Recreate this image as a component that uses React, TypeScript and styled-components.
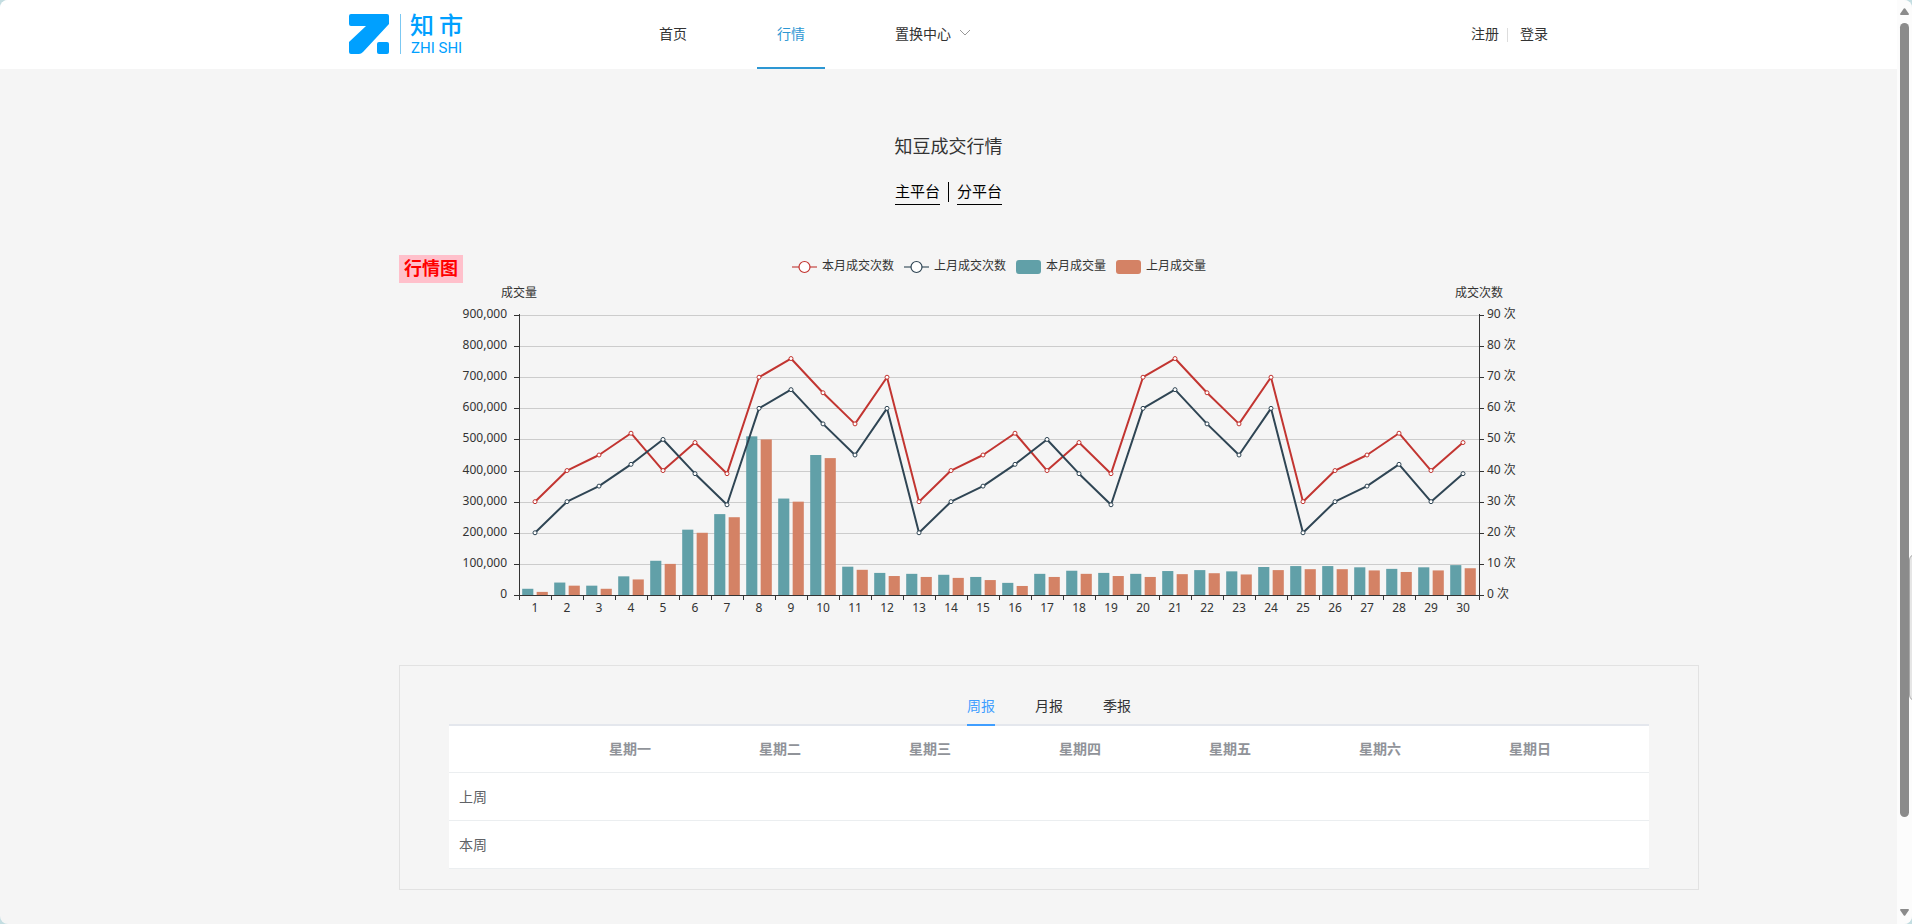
import React, { useState } from "react";
import styled, { createGlobalStyle } from "styled-components";

const GlobalStyle = createGlobalStyle`
  *, *::before, *::after { box-sizing: border-box; }
  body {
    margin: 0;
    background: #c3dde1;
    color: #333;
    font-family: "Noto Sans", "Noto Sans CJK SC", sans-serif;
    font-size: 14px;
  }
  a { color: inherit; text-decoration: none; }
  button { font: inherit; color: inherit; background: none; border: 0; padding: 0; cursor: pointer; }
`;

const Shell = styled.div`
  position: relative;
  display: flex;
  min-height: 100vh;
  border-radius: 8px;
  overflow: hidden;
  background: #f5f5f5;
`;

const Page = styled.div`
  flex: 1;
  min-width: 0;
`;

const Container = styled.div`
  max-width: 1199px;
  margin: 0 auto;
`;

const Header = styled.header`
  background: #fff;
`;

const HeaderInner = styled(Container)`
  display: flex;
  align-items: center;
  height: 69px;
`;

const Logo = styled.a`
  display: block;
  margin-right: 175px;
  svg { display: block; }
`;

const Nav = styled.nav`
  display: flex;
  gap: 50px;
  height: 100%;
`;

const NavItem = styled.a<{ $active?: boolean }>`
  display: flex;
  align-items: center;
  gap: 8px;
  height: 100%;
  padding: 0 20px 2px;
  border-bottom: 2px solid ${(p) => (p.$active ? "#2d97d3" : "transparent")};
  color: ${(p) => (p.$active ? "#2d97d3" : "#333")};
`;

const Account = styled.div`
  display: flex;
  align-items: center;
  margin-left: auto;
`;

const AccountLink = styled.a`
  padding-bottom: 4px;
`;

const AccountDivider = styled.span`
  width: 1px;
  height: 14px;
  margin: 0 12px 0 8px;
  background: #ddd;
`;

const Title = styled.h1`
  margin: 0;
  padding-top: 65px;
  font-size: 18px;
  font-weight: 400;
  line-height: 24px;
  text-align: center;
`;

const Platforms = styled.div`
  display: flex;
  justify-content: center;
  gap: 8px;
  margin: 24px 0 50px;
  color: #000;
  font-size: 15px;
`;

const PlatformLink = styled.a`
  padding-bottom: 4px;
  border-bottom: 1px solid #000;
  line-height: 18px;
`;

const PlatformDivider = styled.span`
  width: 1px;
  height: 20px;
  background: #000;
`;

const Content = styled.main`
  margin: 0 -151px 34px 50px;
  @media (max-width: 1650px) {
    margin: 0 0 34px;
  }
`;

const ChartPanel = styled.figure`
  max-width: 1200px;
  margin: 0 0 10px;
`;

const ChartHead = styled.div`
  display: grid;
  grid-template-columns: 1fr auto 1fr;
  height: 28px;
`;

const ChartTag = styled.figcaption`
  justify-self: start;
  padding: 0 5px;
  background: #ffc0cb;
  color: #f00;
  font-size: 18px;
  font-weight: 700;
  line-height: 26px;
`;

const Legend = styled.ul`
  display: flex;
  gap: 10px;
  margin: 0;
  padding: 0;
  list-style: none;
`;

const LegendItem = styled.li`
  display: flex;
  align-items: center;
  gap: 5px;
  height: 24px;
  padding-left: 0;
  font-size: 12px;
  line-height: 20px;
  svg { display: block; }
`;

const LegendText = styled.span`
  padding-bottom: 2px;
`;

const Plot = styled.svg`
  display: block;
  width: 100%;
  height: auto;
  font-size: 12px;
`;

const Report = styled.section`
  padding: 20px 49px;
  border: 1px solid #e2e2e2;
`;

const Tabs = styled.div`
  display: flex;
  justify-content: center;
  border-bottom: 2px solid #e4e7ed;
`;

const Tab = styled.button<{ $active: boolean }>`
  height: 40px;
  margin: 0 20px -2px;
  padding-top: 2px;
  border-bottom: 2px solid ${(p) => (p.$active ? "#409eff" : "transparent")};
  color: ${(p) => (p.$active ? "#409eff" : "#303133")};
  line-height: 36px;
`;

const Table = styled.table`
  width: 100%;
  border-collapse: separate;
  border-spacing: 0;
  table-layout: fixed;
  background: #fff;
  text-align: left;
`;

const HeadCell = styled.th`
  height: 47px;
  padding: 0 10px 2px;
  border-bottom: 1px solid #ebeef0;
  color: #909399;
  font-weight: 700;
`;

const RowHead = styled.th`
  height: 48px;
  padding: 0 10px 2px;
  border-bottom: 1px solid #ebeef0;
  color: #606266;
  font-weight: 400;
`;

const Cell = styled.td`
  padding: 0 10px;
  border-bottom: 1px solid #ebeef0;
`;

const ScrollTrack = styled.div`
  display: flex;
  flex: 0 0 15px;
  flex-direction: column;
  align-items: center;
  gap: 8px;
  padding: 8px 0;
  background: #fcfcfc;
  svg { display: block; }
`;

const ScrollThumb = styled.div`
  flex: 793;
  width: 9px;
  border-radius: 5px;
  background: #8b8b8b;
`;

const ScrollRest = styled.div`
  flex: 76;
`;

const EdgeHandle = styled.div`
  position: absolute;
  top: 60%;
  right: -17px;
  width: 20px;
  height: 147px;
  border: 1px solid #a8a8a8;
  border-radius: 6px;
  background: #e6e6e6;
`;

const RED = "#c23531";
const NAVY = "#2f4554";
const TEAL = "#61a0a8";
const ORANGE = "#d48265";

const cycle = [30, 40, 45, 52, 40, 49, 39, 70, 76, 65, 55, 70];
const lastCycle = [20, 30, 35, 42, 50, 39, 29, 60, 66, 55, 45, 60];
const thisMonthCount = [...cycle, ...cycle, 30, 40, 45, 52, 40, 49];
const lastMonthCount = [...lastCycle, ...lastCycle, 20, 30, 35, 42, 30, 39];

// Volumes in thousands, one entry per day of the month.
const thisMonthVolume = [
  20, 40, 30, 60, 110, 210, 260, 510, 310, 450, 91, 71, 68, 65, 58,
  39, 68, 78, 71, 68, 77, 80, 76, 90, 93, 93, 89, 84, 89, 96,
];
const lastMonthVolume = [
  10, 30, 20, 50, 100, 200, 250, 500, 300, 440, 81, 61, 58, 55, 48,
  29, 58, 68, 61, 58, 67, 70, 66, 80, 83, 83, 79, 74, 79, 86,
];

const LEFT = 120;
const RIGHT = 1080;
const TOP = 60;
const BASE = 340;
const BAND = (RIGHT - LEFT) / 30;
const BAR = (BAND * 0.8) / 2.3;

const yOf = (count: number) => BASE - (count / 90) * (BASE - TOP);
const lineY = (count: number) => Math.round(yOf(count)) + 0.5;
const xOf = (i: number) => LEFT + BAND * (i + 0.5);

function Line({ values, color }: { values: number[]; color: string }) {
  return (
    <g stroke={color}>
      <polyline
        points={values.map((v, i) => `${xOf(i)},${yOf(v)}`).join(" ")}
        fill="none"
        strokeWidth="2"
        strokeLinejoin="bevel"
      />
      {values.map((v, i) => (
        <circle key={i} cx={xOf(i)} cy={yOf(v)} r="2" fill="#fff" />
      ))}
    </g>
  );
}

function Bars({ values, color, offset }: { values: number[]; color: string; offset: number }) {
  return (
    <g fill={color}>
      {values.map((v, i) => {
        const y = yOf(v / 10);
        return <rect key={i} x={LEFT + BAND * i + offset} y={y} width={BAR} height={BASE - y} />;
      })}
    </g>
  );
}

const steps = [0, 10, 20, 30, 40, 50, 60, 70, 80, 90];

function MarketChart() {
  return (
    <Plot viewBox="0 28 1200 372" role="img" aria-label="知豆成交行情">
      <g stroke="#ccc">
        {steps.slice(1).map((s) => (
          <line key={s} x1={LEFT} x2={RIGHT} y1={lineY(s)} y2={lineY(s)} />
        ))}
      </g>
      <Bars values={thisMonthVolume} color={TEAL} offset={BAND * 0.1} />
      <Bars values={lastMonthVolume} color={ORANGE} offset={BAND * 0.1 + BAR * 1.3} />
      <g stroke="#333">
        <line x1={LEFT} x2={RIGHT + 1} y1={BASE + 0.5} y2={BASE + 0.5} />
        <line x1={LEFT + 0.5} x2={LEFT + 0.5} y1={TOP - 1} y2={BASE} />
        <line x1={RIGHT + 0.5} x2={RIGHT + 0.5} y1={TOP - 1} y2={BASE} />
        {steps.map((s) => (
          <path key={s} d={`M${LEFT - 5} ${lineY(s)}h5M${RIGHT} ${lineY(s)}h5`} />
        ))}
        {Array.from({ length: 31 }, (_, i) => (
          <line key={i} x1={LEFT + BAND * i + 0.5} x2={LEFT + BAND * i + 0.5} y1={BASE} y2={BASE + 5} />
        ))}
      </g>
      <Line values={thisMonthCount} color={RED} />
      <Line values={lastMonthCount} color={NAVY} />
      <g fill="#333">
        <text x={LEFT} y="42" textAnchor="middle">成交量</text>
        <text x={RIGHT} y="42" textAnchor="middle">成交次数</text>
        {steps.map((s) => (
          <React.Fragment key={s}>
            <text x={LEFT - 12} y={Math.round(yOf(s)) + 3} textAnchor="end">
              {(s * 10000).toLocaleString("en-US")}
            </text>
            <text x={RIGHT + 8} y={Math.round(yOf(s)) + 3}>{`${s} 次`}</text>
          </React.Fragment>
        ))}
        {thisMonthCount.map((_, i) => (
          <text key={i} x={xOf(i)} y={BASE + 17} textAnchor="middle">{i + 1}</text>
        ))}
      </g>
    </Plot>
  );
}

function LegendMark({ color, line }: { color: string; line?: boolean }) {
  return (
    <svg width="25" height="14" viewBox="0 0 25 14" aria-hidden="true">
      {line ? (
        <>
          <path d="M0 7h25" stroke={color} strokeWidth="2" opacity="0.55" />
          <circle cx="12.5" cy="7" r="5.5" fill="#fff" stroke={color} strokeWidth="1.2" />
        </>
      ) : (
        <rect width="25" height="14" rx="3" fill={color} />
      )}
    </svg>
  );
}

const legend = [
  { name: "本月成交次数", color: RED, line: true },
  { name: "上月成交次数", color: NAVY, line: true },
  { name: "本月成交量", color: TEAL, line: false },
  { name: "上月成交量", color: ORANGE, line: false },
];

function LogoMark() {
  return (
    <svg width="115" height="61" viewBox="0 -9 115 61" aria-label="知市 ZHI SHI">
      <g fill="#00a0ff">
        <path d="M2 1H38Q40 1 40 3V11L14 39Q12 41 10 41H2Q0 41 0 39V29L17 13H2Q0 13 0 11V3Q0 1 2 1Z" />
        <rect x="28" y="29" width="12" height="12" rx="2" />
        <g fontFamily='"Noto Sans CJK SC", sans-serif' fontSize="24" fontWeight="500">
          <text x="61" y="21">知</text>
          <text x="90" y="21">市</text>
        </g>
        <text x="62" y="40" fontFamily="Roboto, sans-serif" fontSize="15">ZHI SHI</text>
      </g>
      <path d="M51.5 1V41" stroke="#7cc8f2" />
    </svg>
  );
}

const days = ["星期一", "星期二", "星期三", "星期四", "星期五", "星期六", "星期日"];
const reports = [
  { name: "周报", rows: ["上周", "本周"] },
  { name: "月报", rows: ["上月", "本月"] },
  { name: "季报", rows: ["上季", "本季"] },
];

export default function App() {
  const [active, setActive] = useState(0);
  return (
    <>
      <GlobalStyle />
      <Shell>
        <Page>
          <Header>
            <HeaderInner>
              <Logo href="#"><LogoMark /></Logo>
              <Nav>
                <NavItem href="#">首页</NavItem>
                <NavItem href="#" $active>行情</NavItem>
                <NavItem as="button" type="button">
                  置换中心
                  <svg width="12" height="8" viewBox="0 0 12 8" fill="none" stroke="#999" aria-hidden="true">
                    <path d="M1 1L6 6L11 1" />
                  </svg>
                </NavItem>
              </Nav>
              <Account>
                <AccountLink href="#">注册</AccountLink>
                <AccountDivider />
                <AccountLink href="#">登录</AccountLink>
              </Account>
            </HeaderInner>
          </Header>
          <Container>
            <Title>知豆成交行情</Title>
            <Platforms>
              <PlatformLink href="#">主平台</PlatformLink>
              <PlatformDivider />
              <PlatformLink href="#">分平台</PlatformLink>
            </Platforms>
            <Content>
              <ChartPanel>
                <ChartHead>
                  <ChartTag>行情图</ChartTag>
                  <Legend>
                    {legend.map((item) => (
                      <LegendItem key={item.name}>
                        <LegendMark color={item.color} line={item.line} />
                        <LegendText>{item.name}</LegendText>
                      </LegendItem>
                    ))}
                  </Legend>
                </ChartHead>
                <MarketChart />
              </ChartPanel>
              <Report>
                <Tabs role="tablist">
                  {reports.map((r, i) => (
                    <Tab
                      key={r.name}
                      type="button"
                      role="tab"
                      aria-selected={i === active}
                      $active={i === active}
                      onClick={() => setActive(i)}
                    >
                      {r.name}
                    </Tab>
                  ))}
                </Tabs>
                <Table>
                  <thead>
                    <tr>
                      <HeadCell as="td" />
                      {days.map((d) => <HeadCell key={d} scope="col">{d}</HeadCell>)}
                    </tr>
                  </thead>
                  <tbody>
                    {reports[active].rows.map((row) => (
                      <tr key={row}>
                        <RowHead scope="row">{row}</RowHead>
                        {days.map((d) => <Cell key={d} />)}
                      </tr>
                    ))}
                  </tbody>
                </Table>
              </Report>
            </Content>
          </Container>
        </Page>
        <ScrollTrack aria-hidden="true">
          <svg width="9" height="7" viewBox="0 0 9 7" fill="#8b8b8b"><path d="M3.8 .6Q4.5 0 5.2 .6L9 6Q9 7 8 7H1Q0 7 0 6Z" /></svg>
          <ScrollThumb />
          <ScrollRest />
          <svg width="9" height="7" viewBox="0 0 9 7" fill="#8b8b8b"><path d="M3.8 6.4Q4.5 7 5.2 6.4L9 1Q9 0 8 0H1Q0 0 0 1Z" /></svg>
        </ScrollTrack>
        <EdgeHandle aria-hidden="true" />
      </Shell>
    </>
  );
}
